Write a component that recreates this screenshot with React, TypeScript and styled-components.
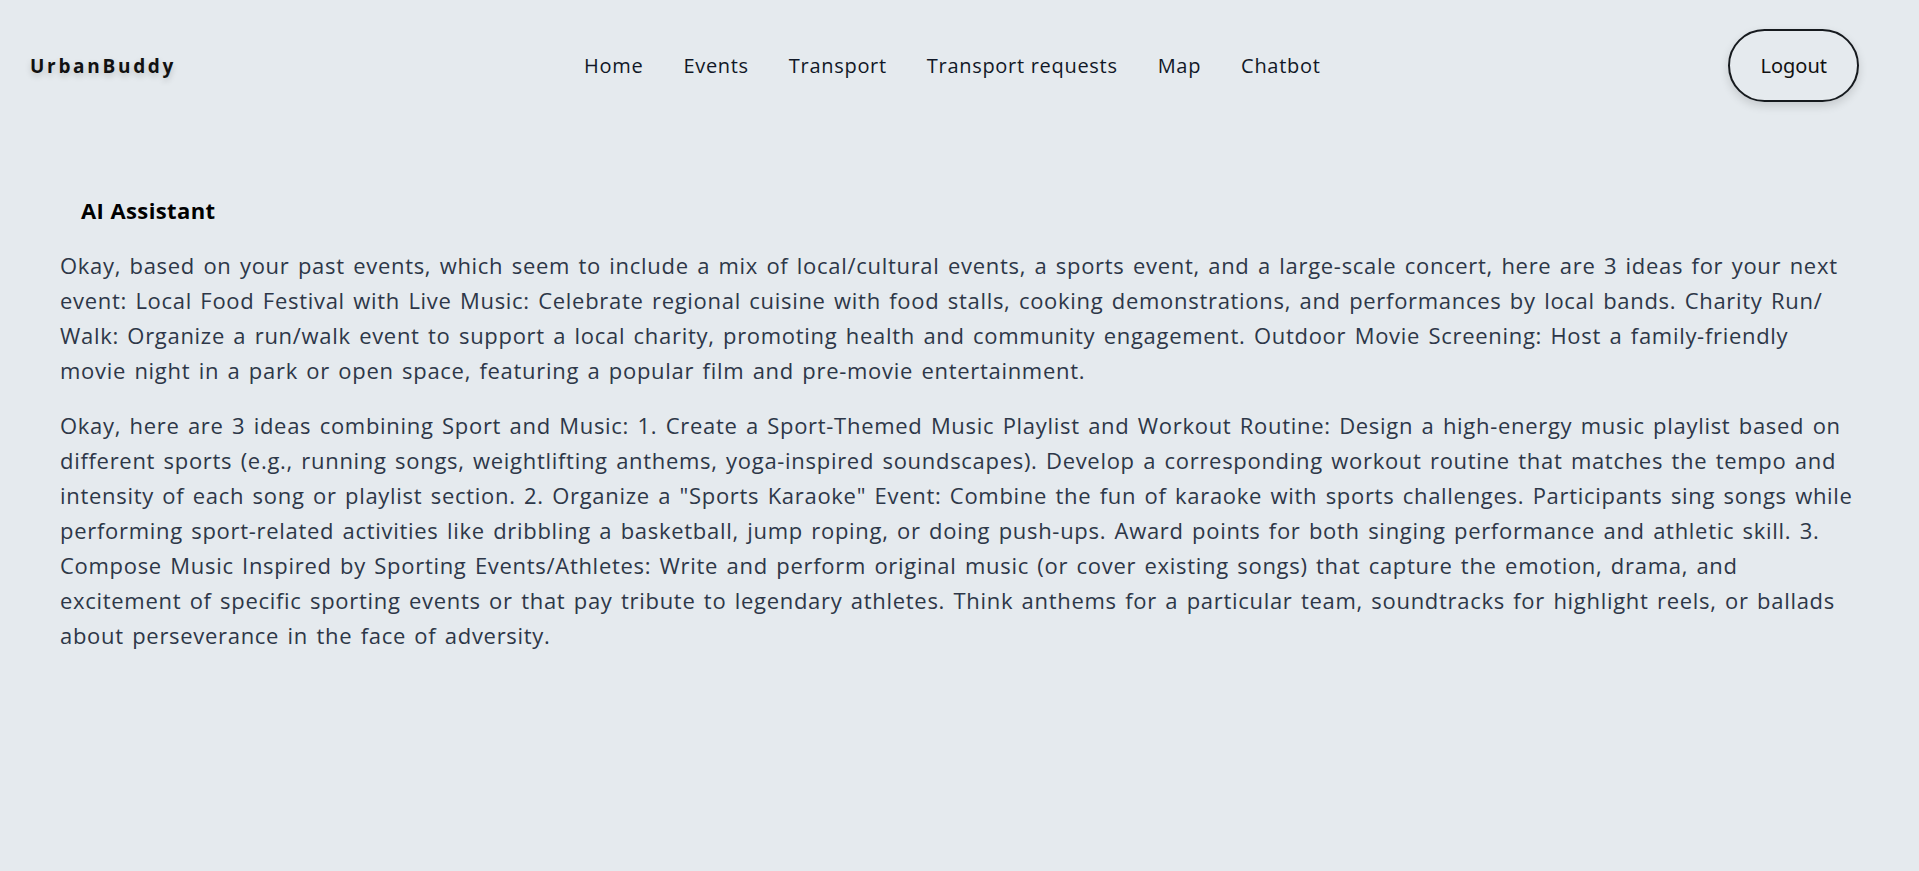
import React from 'react';
import styled, { createGlobalStyle } from 'styled-components';

const GlobalStyle = createGlobalStyle`
  html, body {
    margin: 0;
    padding: 0;
    background: #e5eaee;
  }
  body {
    font-family: "Open Sans", "Noto Sans", sans-serif;
    color: #2d3748;
  }
  * {
    box-sizing: border-box;
  }
`;

const Page = styled.div`
  min-height: 871px;
  background: #e5eaee;
`;

const Header = styled.header`
  display: flex;
  align-items: center;
  justify-content: space-between;
  padding: 29px 60px 29px 30px;
`;

const Logo = styled.div`
  font-size: 19px;
  font-weight: 700;
  letter-spacing: 2.7px;
  color: #111;
  text-shadow: 0 3px 6px rgba(0, 0, 0, 0.18);
`;

const Nav = styled.nav`
  display: flex;
  align-items: center;
  gap: 40px;
`;

const NavLink = styled.a`
  font-size: 20px;
  letter-spacing: 0.7px;
  color: #111827;
  text-decoration: none;
  cursor: pointer;
`;

const LogoutButton = styled.button`
  font-family: "Noto Sans", "Liberation Sans", sans-serif;
  font-size: 20px;
  color: #111;
  background: transparent;
  border: 2px solid #161a1e;
  border-radius: 999px;
  padding: 21px 30px;
  line-height: 27px;
  box-shadow: 0 4px 10px rgba(0, 0, 0, 0.14);
  cursor: pointer;
`;

const Main = styled.main`
  padding: 62px 60px 40px 60px;
`;

const Title = styled.h2`
  margin: 0 0 20px 21px;
  font-size: 22px;
  font-weight: 700;
  letter-spacing: 0.4px;
  color: #000;
  line-height: 35px;
`;

const Message = styled.p`
  margin: 0 0 20px 0;
  font-size: 22px;
  line-height: 35px;
  letter-spacing: 0.7px;
  word-spacing: 2px;
  color: #2d3748;
`;

const links = ['Home', 'Events', 'Transport', 'Transport requests', 'Map', 'Chatbot'];

const messages: React.ReactNode[] = [
  <>
    Okay, based on your past events, which seem to include a mix of local/cultural events, a sports
    event, and a large-scale concert, here are 3 ideas for your next event: Local Food Festival with
    Live Music: Celebrate regional cuisine with food stalls, cooking demonstrations, and performances
    by local bands. Charity Run/<wbr />Walk: Organize a run/walk event to support a local charity,
    promoting health and community engagement. Outdoor Movie Screening: Host a family-friendly movie
    night in a park or open space, featuring a popular film and pre-movie entertainment.
  </>,
  'Okay, here are 3 ideas combining Sport and Music: 1. Create a Sport-Themed Music Playlist and Workout Routine: Design a high-energy music playlist based on different sports (e.g., running songs, weightlifting anthems, yoga-inspired soundscapes). Develop a corresponding workout routine that matches the tempo and intensity of each song or playlist section. 2. Organize a "Sports Karaoke" Event: Combine the fun of karaoke with sports challenges. Participants sing songs while performing sport-related activities like dribbling a basketball, jump roping, or doing push-ups. Award points for both singing performance and athletic skill. 3. Compose Music Inspired by Sporting Events/Athletes: Write and perform original music (or cover existing songs) that capture the emotion, drama, and excitement of specific sporting events or that pay tribute to legendary athletes. Think anthems for a particular team, soundtracks for highlight reels, or ballads about perseverance in the face of adversity.',
];

export default function App() {
  return (
    <>
      <GlobalStyle />
      <Page>
        <Header>
          <Logo>UrbanBuddy</Logo>
          <Nav>
            {links.map((l) => (
              <NavLink key={l}>{l}</NavLink>
            ))}
          </Nav>
          <LogoutButton>Logout</LogoutButton>
        </Header>
        <Main>
          <Title>AI Assistant</Title>
          {messages.map((m, i) => (
            <Message key={i}>{m}</Message>
          ))}
        </Main>
      </Page>
    </>
  );
}
